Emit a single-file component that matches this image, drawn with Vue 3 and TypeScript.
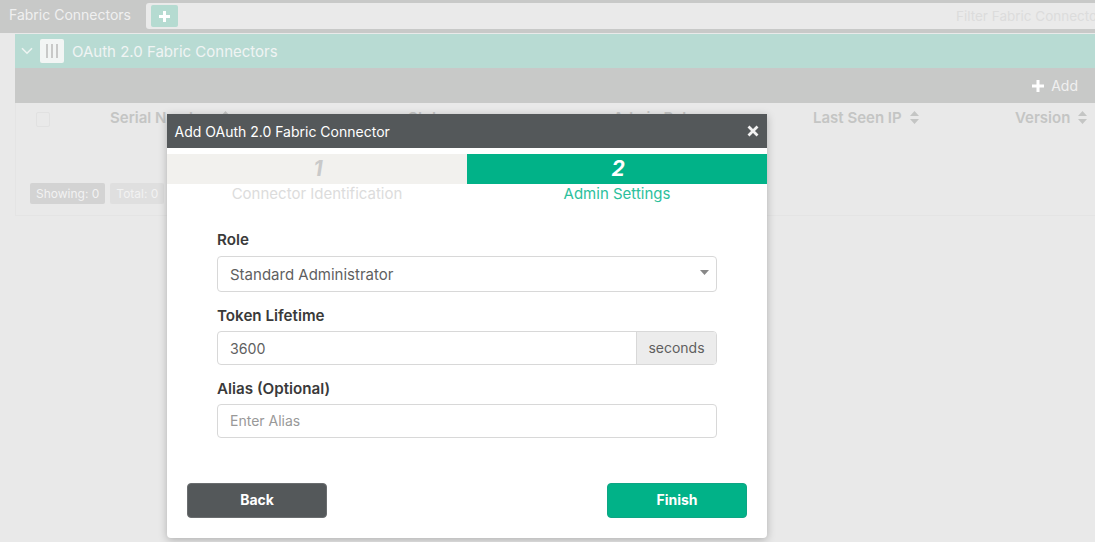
<script setup lang="ts">
const columns = [
  { label: 'Serial Number', width: 298, arrow: true },
  { label: 'Status', width: 205, arrow: false },
  { label: 'Admin Role', width: 200, arrow: false },
  { label: 'Last Seen IP', width: 202, arrow: true },
  { label: 'Version', width: 90, arrow: true },
]
</script>

<template>
  <div class="page">
    <header class="topbar">
      <span class="top-title">Fabric Connectors</span>
      <div class="filter-bar">
        <button class="plus-btn" type="button">
          <svg width="11" height="11" viewBox="0 0 11 11"><path d="M4 0h3v4h4v3H7v4H4V7H0V4h4z" fill="#fff" /></svg>
        </button>
        <span class="filter-text">Filter Fabric Connectors</span>
      </div>
    </header>

    <section class="panel">
      <div class="panel-head">
        <svg class="chev" width="12" height="8" viewBox="0 0 12 8"><path d="M1 1.2l5 5 5-5" fill="none" stroke="#eef4f2" stroke-width="1.6" /></svg>
        <span class="panel-icon"><i></i><i></i><i></i></span>
        <span class="panel-title">OAuth 2.0 Fabric Connectors</span>
      </div>
      <div class="toolbar">
        <svg width="12" height="12" viewBox="0 0 12 12"><path d="M4.5 0h3v4.500h4.500v3H7.500V12h-3V7.500H0v-3h4.500z" fill="#fff" /></svg>
        <span>Add</span>
      </div>
      <div class="table-area">
        <div class="thead">
          <span class="check"></span>
          <div v-for="c in columns" :key="c.label" class="th" :style="{ width: c.width + 'px' }">
            <span class="th-label">{{ c.label }}</span>
            <svg v-if="c.arrow" width="9" height="13" viewBox="0 0 9 13"><path d="M4.500 0L9 5H0zM0 8h9l-4.500 5z" fill="#c4c5c4" /></svg>
          </div>
        </div>
        <div class="badges">
          <span class="badge dark">Showing: 0</span>
          <span class="badge light">Total: 0</span>
        </div>
      </div>
    </section>

    <div class="modal">
      <div class="modal-head">
        <span>Add OAuth 2.0 Fabric Connector</span>
        <svg width="12" height="12" viewBox="0 0 12 12"><path d="M1.500 1.500l9 9M10.500 1.500l-9 9" stroke="#f2f2f2" stroke-width="2.800" /></svg>
      </div>
      <div class="steps">
        <div class="step">
          <div class="step-num">1</div>
          <div class="step-label">Connector Identification</div>
        </div>
        <div class="step active">
          <div class="step-num">2</div>
          <div class="step-label">Admin Settings</div>
        </div>
      </div>

      <form class="form">
        <label class="label first">Role</label>
        <div class="control select">
          <span>Standard Administrator</span>
          <svg width="9" height="5" viewBox="0 0 9 5"><path d="M0 0h9L4.500 5z" fill="#888" /></svg>
        </div>

        <label class="label">Token Lifetime</label>
        <div class="control group">
          <span class="group-value">3600</span>
          <span class="addon">seconds</span>
        </div>

        <label class="label">Alias (Optional)</label>
        <div class="control alias">Enter Alias</div>
      </form>

      <div class="actions">
        <button class="btn back" type="button">Back</button>
        <button class="btn finish" type="button">Finish</button>
      </div>
    </div>
  </div>
</template>

<style>
html, body { margin: 0; background: #e9e9e9; }
</style>

<style scoped>
.page {
  position: relative;
  width: 1095px;
  height: 542px;
  overflow: hidden;
  background: #e9e9e9;
  font-family: Inter, "Liberation Sans", sans-serif;
}
.topbar {
  display: flex;
  height: 33px;
  box-sizing: border-box;
  padding: 3px 0 4px;
  background: #c8c9c8;
}
.top-title {
  width: 146px;
  padding-left: 9px;
  box-sizing: border-box;
  font-size: 14px;
  line-height: 24px;
  color: #f0f0f0;
}
.filter-bar {
  flex: 1;
  display: flex;
  justify-content: space-between;
  align-items: center;
  background: #eaeaea;
  border-radius: 3px 0 0 3px;
  padding-left: 5px;
  overflow: hidden;
}
.plus-btn {
  width: 27px;
  height: 22px;
  padding: 0;
  border: 0;
  border-radius: 2px;
  background: #b5dbd1;
  display: flex;
  align-items: center;
  justify-content: center;
}
.filter-text {
  flex: none;
  width: 139px;
  white-space: nowrap;
  overflow: hidden;
  font-size: 13.500px;
  color: #dcdcdc;
}
.panel {
  margin: 1px 0 0 15px;
  height: 182px;
  border-bottom: 1px solid #e4e4e4;
  border-left: 1px solid #e4e4e4;
  box-sizing: border-box;
}
.panel-head {
  height: 34px;
  margin-left: -1px;
  display: flex;
  align-items: center;
  background: #b8dbd3;
  padding-left: 6px;
}
.chev { margin-right: 7px; }
.panel-icon {
  width: 24px;
  height: 24px;
  border-radius: 2px;
  background: #f2f5f4;
  display: flex;
  justify-content: center;
  align-items: center;
  gap: 2.500px;
}
.panel-icon i {
  width: 2.500px;
  height: 14px;
  background: #c8c9c8;
}
.panel-title {
  margin-left: 8px;
  font-size: 15px;
  color: #f0f4f3;
}
.toolbar {
  height: 35px;
  margin-left: -1px;
  background: #c8c9c8;
  display: flex;
  align-items: center;
  justify-content: flex-end;
  gap: 7px;
  padding-right: 17px;
  font-size: 14px;
  color: #f0f0f0;
}
.table-area {
  height: 112px;
  display: flex;
  flex-direction: column;
  justify-content: space-between;
}
.thead {
  display: flex;
  padding: 6px 0 0 20px;
  white-space: nowrap;
}
.check {
  flex: none;
  width: 12px;
  height: 13px;
  border: 1px solid #e1e1e1;
  border-radius: 2px;
  margin-top: 3px;
  margin-right: 60px;
}
.th {
  flex: none;
  display: flex;
  align-items: center;
  gap: 8px;
  height: 16px;
  font-size: 15px;
  font-weight: 600;
  color: #c4c5c4;
}
.badges {
  display: flex;
  gap: 5px;
  padding: 0 0 11px 14px;
}
.badge {
  height: 21px;
  line-height: 21px;
  padding: 0 6px;
  border-radius: 2px;
  font-size: 12px;
  color: #f2f2f2;
}
.badge.dark { background: #d3d3d3; }
.badge.light { background: #dfdfdf; }
.modal {
  position: absolute;
  left: 167px;
  top: 114px;
  width: 600px;
  height: 424px;
  background: #fff;
  border-radius: 0 0 4px 4px;
  box-shadow: 0 2px 8px rgba(0, 0, 0, 0.25);
}
.modal-head {
  height: 34px;
  box-sizing: border-box;
  display: flex;
  justify-content: space-between;
  align-items: center;
  padding: 0 8px 0 7.500px;
  background: #54585a;
  font-size: 14px;
  color: #fff;
}
.steps {
  display: flex;
  padding-top: 6px;
}
.step { width: 300px; text-align: center; }
.step-num {
  height: 30px;
  line-height: 30px;
  padding-left: 2px;
  box-sizing: border-box;
  background: #f2f1ee;
  font-size: 21px;
  font-weight: 700;
  font-style: italic;
  color: #c9c9c9;
}
.step-label {
  font-size: 15px;
  line-height: 20px;
  color: #dcdcdc;
}
.step.active .step-num { background: #01b288; color: #fff; }
.step.active .step-label { color: #2cc09c; }
.form {
  padding: 0 50px;
}
.label {
  display: block;
  font-size: 15.200px;
  font-weight: 600;
  line-height: 20px;
  color: #3a3a3a;
  margin: 14px 0 5px;
}
.label.first { margin: 26px 0 6px; }
.control {
  box-sizing: border-box;
  height: 34px;
  border: 1px solid #d8d8d8;
  border-radius: 4px;
  font-size: 15px;
  color: #5f5f5f;
  display: flex;
  align-items: center;
  padding-left: 12px;
}
.select {
  height: 36px;
  justify-content: space-between;
  padding-right: 7px;
}
.select svg { margin-bottom: 4px; }
.group { padding-left: 0; }
.group-value { flex: 1; padding-left: 12px; font-size: 14.200px; }
.addon {
  width: 79px;
  height: 100%;
  line-height: 32px;
  text-align: center;
  background: #ececec;
  border-left: 1px solid #d8d8d8;
  border-radius: 0 3px 3px 0;
  font-size: 14px;
}
.alias { color: #999; font-size: 14px; padding-bottom: 1px; }
.actions {
  display: flex;
  justify-content: space-between;
  padding: 45px 20px 0;
}
.btn {
  width: 140px;
  height: 35px;
  padding: 0 0 3px;
  border-radius: 4px;
  font-family: inherit;
  font-size: 14px;
  font-weight: 700;
  color: #fff;
}
.back { background: #54585a; border: 1px solid #6a6d6f; }
.finish { background: #01b288; border: 1px solid #0ea584; }
</style>
